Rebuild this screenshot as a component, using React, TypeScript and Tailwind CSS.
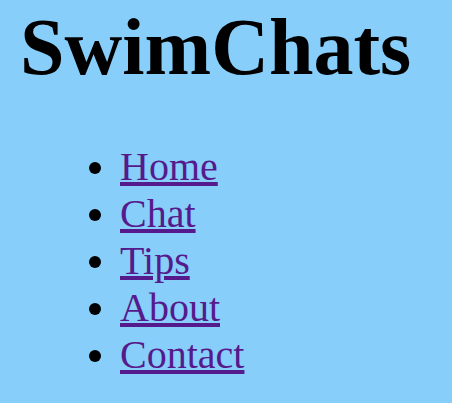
const links = ['Home', 'Chat', 'Tips', 'About', 'Contact'];

export default function App() {
  return (
    <div
      className="min-h-screen bg-[#87cefa] px-5 pt-[3px] text-black"
      style={{ fontFamily: '"Liberation Serif", "Times New Roman", serif' }}
    >
      <h1 className="mb-[52px] text-[80px] leading-[88px] font-bold">
        SwimChats
      </h1>
      <ul className="ml-[60px] list-disc pl-10 text-[40px] leading-[47px]">
        {links.map((name) => (
          <li key={name}>
            <a href="#" className="text-[#551a8b] underline">
              {name}
            </a>
          </li>
        ))}
      </ul>
    </div>
  );
}
